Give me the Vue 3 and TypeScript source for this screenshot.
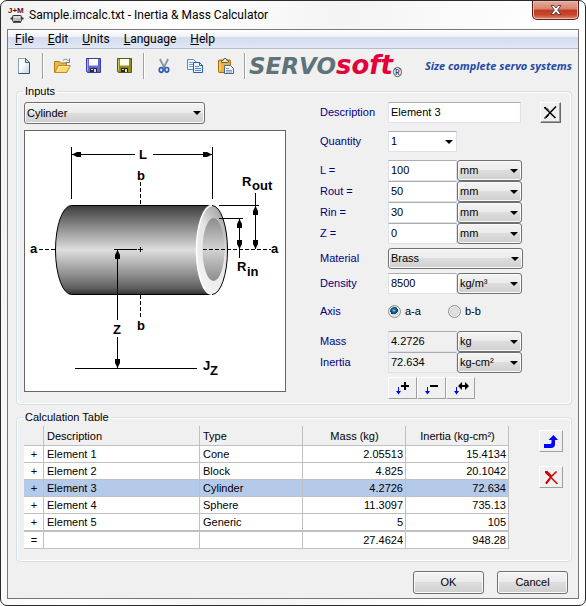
<script setup lang="ts">
import { ref } from 'vue'

interface Dimension {
  id: string
  label: string
  value: string
}

interface Row {
  name: string
  type: string
  mass: string
  inertia: string
}

const menus = ['File', 'Edit', 'Units', 'Language', 'Help']

const shape = ref('Cylinder')
const description = ref('Element 3')
const quantity = ref('1')
const material = ref('Brass')
const density = ref('8500')
const axis = ref('a-a')
const selected = ref(2)

const dimensions = ref<Dimension[]>([
  { id: 'length', label: 'L =', value: '100' },
  { id: 'rout', label: 'Rout =', value: '50' },
  { id: 'rin', label: 'Rin =', value: '30' },
  { id: 'offset', label: 'Z =', value: '0' },
])

const rows: Row[] = [
  { name: 'Element 1', type: 'Cone', mass: '2.05513', inertia: '15.4134' },
  { name: 'Element 2', type: 'Block', mass: '4.825', inertia: '20.1042' },
  { name: 'Element 3', type: 'Cylinder', mass: '4.2726', inertia: '72.634' },
  { name: 'Element 4', type: 'Sphere', mass: '11.3097', inertia: '735.13' },
  { name: 'Element 5', type: 'Generic', mass: '5', inertia: '105' },
]
</script>

<template>
  <div class="window">
    <header class="titlebar">
      <svg class="app-icon" width="17" height="16" viewBox="0 0 17 16" aria-hidden="true">
        <text x="0" y="6" class="app-icon-text">J+M</text>
        <path d="M2.5 11.500h2M13 11.500h2.500" stroke="#333" stroke-width="2" />
        <rect x="4.500" y="8.500" width="9" height="6" rx="1" fill="#bbb" stroke="#333" />
        <path d="M6 10h6" stroke="#fff" />
        <path d="M5 15.500h8" stroke="#555" />
      </svg>
      <h1 class="title">Sample.imcalc.txt - Inertia &amp; Mass Calculator</h1>
      <button class="close" type="button" aria-label="Close">
        <svg width="12" height="10" viewBox="0 0 12 10">
          <path d="M1 .5h3l2 2.500 2-2.500h3L7.700 5 11 9.500H8L6 7 4 9.500H1L4.300 5z" fill="#fff" stroke="#5a4048" stroke-width="1" />
        </svg>
      </button>
    </header>

    <main class="client">
      <nav class="menubar">
        <button v-for="m in menus" :key="m" type="button" class="menu"><u>{{ m[0] }}</u>{{ m.slice(1) }}</button>
      </nav>

      <div class="toolbar">
        <button class="tool" type="button" aria-label="New">
          <svg width="16" height="16" viewBox="0 0 16 16">
            <defs>
              <linearGradient id="page" x1="0" y1="0" x2="1" y2="1">
                <stop offset=".4" stop-color="#fff" /><stop offset="1" stop-color="#b9d0e4" />
              </linearGradient>
            </defs>
            <path d="M2.500.5h7l4 4v11h-11z" fill="url(#page)" stroke="#8ba3b8" />
            <path d="M13.500 4.500v11h-11" fill="none" stroke="#31506e" />
            <path d="M9.500.5v4h4z" fill="#d8e6f2" stroke="#43617e" />
          </svg>
        </button>
        <i class="sep"></i>
        <button class="tool" type="button" aria-label="Open">
          <svg width="17" height="16" viewBox="0 0 17 16">
            <path d="M.5 14.500v-11h5l1 1.500h6v3" fill="#e9b94c" stroke="#b07a12" />
            <path d="M.8 14.500l3.500-7h12l-3.500 7z" fill="#ffd873" stroke="#c08a1c" />
            <path d="M3.500 12.500l2-4h9" fill="none" stroke="#fff0b8" />
            <path d="M9 2.500c2-2 4-1.500 5.500.5" fill="none" stroke="#5f7f9f" />
            <path d="M15.500.5v4h-4" fill="none" stroke="#5f7f9f" />
          </svg>
        </button>
        <button class="tool" type="button" aria-label="Save">
          <svg width="15" height="15" viewBox="0 0 15 15">
            <path d="M.5.5h14v14h-13l-1-1z" fill="#6668cf" stroke="#3b3d9c" />
            <path d="M1.500 13V1.500" stroke="#a4a6f0" />
            <path d="M3 1h9v7H3z" fill="#fff" /><path d="M3 7h9v1H3z" fill="#b9bce8" />
            <path d="M4 10h7v4H4z" fill="#26273f" /><path d="M8 11h2v3H8zM5 11h2v1H5z" fill="#d8d8e8" />
          </svg>
        </button>
        <button class="tool" type="button" aria-label="Save as">
          <svg width="15" height="15" viewBox="0 0 15 15">
            <path d="M.5.5h14v14h-13l-1-1z" fill="#8f8a24" stroke="#5d5a10" />
            <path d="M1.500 13V1.500" stroke="#c9c565" />
            <path d="M3 1h9v7H3z" fill="#fffff0" /><path d="M3 7h9v1H3z" fill="#d0cd88" />
            <path d="M4 10h7v4H4z" fill="#26260c" /><path d="M8 11h2v3H8zM5 11h2v1H5z" fill="#dddcc4" />
          </svg>
        </button>
        <i class="sep"></i>
        <button class="tool" type="button" aria-label="Cut">
          <svg width="12" height="16" viewBox="0 0 12 16">
            <path d="M2 1l4.500 9M10 1L5.500 10" stroke="#7d8a99" stroke-width="1.800" />
            <path d="M2.800 1.200l3 6M9 1.500L6.500 7" stroke="#c8d2dc" stroke-width=".6" />
            <ellipse cx="3.200" cy="12" rx="1.900" ry="2.300" fill="none" stroke="#2c5cb4" stroke-width="1.700" />
            <ellipse cx="8.800" cy="11.800" rx="1.900" ry="2.300" fill="none" stroke="#2c5cb4" stroke-width="1.700" />
          </svg>
        </button>
        <button class="tool" type="button" aria-label="Copy">
          <svg width="16" height="14" viewBox="0 0 16 14">
            <path d="M.5.5h6l2.500 2.500v7.500H.5z" fill="#edf4fd" stroke="#5b8bc6" />
            <path d="M2 3.500h4M2 5.500h5M2 7.500h5" stroke="#7ba3d4" />
            <path d="M6.500 3.500h6l3 3v7h-9z" fill="#edf4fd" stroke="#2b5ca6" />
            <path d="M12.500 3.500v3h3z" fill="#fff" stroke="#2b5ca6" />
            <path d="M8 7.500h4M8 9.500h6M8 11.500h6" stroke="#5585c8" />
          </svg>
        </button>
        <button class="tool" type="button" aria-label="Paste">
          <svg width="16" height="16" viewBox="0 0 16 16">
            <rect x=".5" y="2" width="12" height="12.500" rx="1" fill="#eab13c" stroke="#a66d0b" />
            <path d="M2 4v9" stroke="#ffdf8e" />
            <path d="M3.500 4.500v-2h1.500l1-2h2l1 2h1.500v2z" fill="#e6e6d8" stroke="#6d6242" />
            <path d="M6.500 7.500h6l3 3v5h-9z" fill="#edf3fa" stroke="#50688a" />
            <path d="M8 10.500h3M8 12.500h6M8 14h6" stroke="#7b95b8" />
          </svg>
        </button>
        <i class="sep"></i>
        <div class="brand">
          <span class="brand-servo">SERVO</span><span class="brand-soft">soft</span><span class="brand-mark">®</span>
        </div>
        <p class="tagline">Size complete servo systems</p>
      </div>

      <fieldset class="group">
        <legend>Inputs</legend>
        <div class="inputs">
          <div class="shape">
            <span class="pick shape-pick">
              <select v-model="shape" aria-label="Shape">
                <option>Cylinder</option><option>Cone</option><option>Block</option><option>Sphere</option><option>Generic</option>
              </select>
            </span>
            <svg class="diagram" viewBox="0 0 260 260" role="img" aria-label="Cylinder dimensions">
              <defs>
                <linearGradient id="body" x1="0" y1="0" x2="0" y2="1">
                  <stop offset="0" stop-color="#3c3c3c" /><stop offset=".25" stop-color="#8e8e8e" />
                  <stop offset=".5" stop-color="#dedede" /><stop offset=".78" stop-color="#8e8e8e" />
                  <stop offset=".93" stop-color="#5e5e5e" /><stop offset="1" stop-color="#303030" />
                </linearGradient>
                <linearGradient id="face" x1=".8" y1="0" x2=".3" y2="1">
                  <stop offset="0" stop-color="#999" /><stop offset=".4" stop-color="#e4e4e4" /><stop offset="1" stop-color="#f4f4f4" />
                </linearGradient>
                <linearGradient id="bore" x1="0" y1="0" x2="0" y2="1">
                  <stop offset="0" stop-color="#8c8c8c" /><stop offset=".5" stop-color="#d2d2d2" /><stop offset="1" stop-color="#8c8c8c" />
                </linearGradient>
                <marker id="tip" viewBox="0 0 9 5" refX="9" refY="2.500" markerWidth="9" markerHeight="5" orient="auto-start-reverse" markerUnits="userSpaceOnUse">
                  <path d="M0 0h4l5 2.500L4 5H0z" fill="#000" stroke="none" />
                </marker>
              </defs>
              <path d="M46.500 74.500H187.500V163.500H46.500A16 44.500 0 0 1 46.500 74.500Z" fill="url(#body)" stroke="#000" />
              <ellipse cx="187" cy="119" rx="15.500" ry="44.500" fill="url(#face)" />
              <path d="M187 163.500A15.500 44.500 0 0 1 187 74.500" fill="none" stroke="#fff" stroke-width="1.500" />
              <path d="M187 74.500A15.500 44.500 0 0 1 187 163.500" fill="none" stroke="#000" />
              <ellipse cx="188.500" cy="118.500" rx="11" ry="31.500" fill="url(#bore)" />
              <g stroke="#000" fill="none">
                <path d="M46.500 16V68M187.500 16V68M194 74.500H234M194 87.500H218M50 237.500H172M89 118.500H112M113 118.500H118M115.500 116V121" />
                <path d="M230.500 62V74M214.500 118V127" />
                <path d="M115.500 51V74M115.500 164V188M14 118.500H31M178 118.500H246" stroke-dasharray="4 2" />
                <path d="M110 23.500H47" marker-end="url(#tip)" />
                <path d="M128 23.500H187" marker-end="url(#tip)" />
                <path d="M92.500 189V119" marker-end="url(#tip)" />
                <path d="M92.500 206V237" marker-end="url(#tip)" />
                <path d="M230.500 75V118" marker-start="url(#tip)" marker-end="url(#tip)" />
                <path d="M214.500 88V118" marker-start="url(#tip)" marker-end="url(#tip)" />
              </g>
              <g class="dims">
                <text x="114" y="28">L</text>
                <text x="112" y="49">b</text>
                <text x="112" y="199">b</text>
                <text x="5" y="122">a</text>
                <text x="246" y="122">a</text>
                <text x="88" y="203">Z</text>
                <text x="217" y="55">R<tspan x="227" y="59">out</tspan></text>
                <text x="212" y="140">R<tspan x="222" y="145">in</tspan></text>
                <text x="178" y="239">J<tspan x="185" y="244">Z</tspan></text>
              </g>
            </svg>
          </div>

          <div class="form">
            <div class="row">
              <label for="description">Description</label>
              <input id="description" v-model="description" class="wide" type="text" />
              <button class="raised" type="button" aria-label="Clear description">
                <svg width="13" height="13" viewBox="0 0 13 13">
                  <path d="M.5 1.500L11.500 12M12 .5L1.500 11.500" stroke="#000" stroke-width="1.500" fill="none" />
                  <path d="M0 1.500h2l3 3M0 12h2l3-3" stroke="#000" fill="none" />
                </svg>
              </button>
            </div>
            <div class="row spaced">
              <label for="quantity">Quantity</label>
              <span class="pick combo"><select id="quantity" v-model="quantity"><option>1</option><option>2</option></select></span>
            </div>
            <div class="spaced">
              <div v-for="d in dimensions" :key="d.id" class="row">
                <label :for="d.id">{{ d.label }}</label>
                <input :id="d.id" v-model="d.value" type="text" />
                <span class="pick unit"><select :aria-label="d.label + ' unit'"><option>mm</option><option>in</option></select></span>
              </div>
            </div>
            <div class="row close-row">
              <label for="material">Material</label>
              <span class="pick material"><select id="material" v-model="material"><option>Brass</option><option>Steel</option></select></span>
            </div>
            <div class="row close-row">
              <label for="density">Density</label>
              <input id="density" v-model="density" type="text" />
              <span class="pick unit"><select aria-label="Density unit"><option>kg/m³</option></select></span>
            </div>
            <div class="row axis" role="radiogroup" aria-label="Axis">
              <span class="caption">Axis</span>
              <label class="choice"><input v-model="axis" type="radio" name="axis" value="a-a" />a-a</label>
              <label class="choice"><input v-model="axis" type="radio" name="axis" value="b-b" />b-b</label>
            </div>
            <div>
              <div class="row">
                <label for="mass">Mass</label>
                <input id="mass" type="text" value="4.2726" readonly />
                <span class="pick unit"><select aria-label="Mass unit"><option>kg</option></select></span>
              </div>
              <div class="row">
                <label for="inertia">Inertia</label>
                <input id="inertia" type="text" value="72.634" readonly />
                <span class="pick unit"><select aria-label="Inertia unit"><option>kg-cm²</option></select></span>
              </div>
            </div>
            <div class="row actions">
              <button class="flat" type="button" aria-label="Add to table">
                <svg width="16" height="14" viewBox="0 0 16 14">
                  <path d="M3.500 6v5" stroke="#00f" fill="none" />
                  <path d="M1 10h5L3.500 13.500z" fill="#00f" />
                  <path d="M10 1v8M6 5h8" stroke="#000" stroke-width="2" />
                </svg>
              </button>
              <button class="flat" type="button" aria-label="Subtract from table">
                <svg width="16" height="14" viewBox="0 0 16 14">
                  <path d="M3.500 6v5" stroke="#00f" fill="none" />
                  <path d="M1 10h5L3.500 13.500z" fill="#00f" />
                  <path d="M6 5h8" stroke="#000" stroke-width="2" />
                </svg>
              </button>
              <button class="flat" type="button" aria-label="Replace in table">
                <svg width="16" height="14" viewBox="0 0 16 14">
                  <path d="M3.500 6v5" stroke="#00f" fill="none" />
                  <path d="M1 10h5L3.500 13.500z" fill="#00f" />
                  <path d="M7 5h7" stroke="#000" stroke-width="2" />
                  <path d="M5 5l4-4v8zM16 5l-4-4v8z" />
                </svg>
              </button>
            </div>
          </div>
        </div>
      </fieldset>

      <fieldset class="group results">
        <legend>Calculation Table</legend>
        <div class="calc">
          <table>
            <colgroup><col class="c-sign" /><col /><col class="c-num" /><col class="c-num" /><col class="c-num" /></colgroup>
            <thead>
              <tr>
                <th></th>
                <th class="left">Description</th>
                <th class="left">Type</th>
                <th>Mass (kg)</th>
                <th>Inertia (kg-cm²)</th>
              </tr>
            </thead>
            <tbody>
              <tr v-for="(r, i) in rows" :key="r.name" :class="{ selected: i === selected }" @click="selected = i">
                <td class="sign">+</td>
                <td>{{ r.name }}</td>
                <td>{{ r.type }}</td>
                <td class="num">{{ r.mass }}</td>
                <td class="num">{{ r.inertia }}</td>
              </tr>
            </tbody>
            <tfoot>
              <tr>
                <td class="sign">=</td>
                <td></td>
                <td></td>
                <td class="num">27.4624</td>
                <td class="num">948.28</td>
              </tr>
            </tfoot>
          </table>
          <div class="side">
            <button class="flat side-button" type="button" aria-label="Load into inputs">
              <svg width="14" height="13" viewBox="0 0 14 13">
                <path d="M0 9h6q1.500 0 1.500-1.500V5H4.500L9.500 0l4.500 5h-3v4q0 4-4 4H0z" fill="#00f" />
              </svg>
            </button>
            <button class="flat side-button" type="button" aria-label="Delete row">
              <svg width="13" height="13" viewBox="0 0 13 13">
                <path d="M0 1l5 4.500L12.500 13M11.500.5L5 7l-4 5.500" stroke="#d40000" stroke-width="1.500" fill="none" />
                <path d="M0 1h2l4 4M1 12.500l4-5" stroke="#d40000" stroke-width="2" fill="none" />
              </svg>
            </button>
          </div>
        </div>
      </fieldset>

      <footer class="footer">
        <button class="push" type="button">OK</button>
        <button class="push" type="button">Cancel</button>
      </footer>
    </main>
  </div>
</template>

<style>
body {
  margin: 0;
  background: #fff;
}
</style>

<style scoped>
.window {
  box-sizing: border-box;
  min-height: 100vh;
  display: flex;
  flex-direction: column;
  padding: 0 6px 6px;
  border: 1px solid #2b2b2b;
  border-radius: 7px;
  background: linear-gradient(100deg, #f1f1f1, #fff 25%, #f4f4f4 50%, #fff 80%);
  color: #000;
  font: 11px/13px "Liberation Sans", Arial, sans-serif;
}
button,
input,
select {
  box-sizing: border-box;
  margin: 0;
  font: inherit;
  color: inherit;
}
button {
  display: flex;
  align-items: center;
  justify-content: center;
  padding: 0;
  border: 0;
  background: none;
}

/* Title bar */
.titlebar {
  display: flex;
  align-items: flex-start;
  height: 28px;
}
.app-icon {
  margin: 6px 4px 0 1px;
}
.app-icon-text {
  font: bold 8px "Liberation Sans", Arial, sans-serif;
  fill: #6b0a1c;
}
.title {
  flex: 1;
  margin: 0;
  font: 12px/28px Roboto, "Segoe UI", sans-serif;
}
.close {
  width: 47px;
  height: 19px;
  border: 1px solid #5b1f1c;
  border-top: 0;
  border-radius: 0 0 5px 5px;
  background: linear-gradient(#e9a99a, #d9836f 45%, #bf3a22 50%, #c8442c 75%, #e08a68);
  box-shadow: inset 0 0 0 1px #eeb8aa;
}

/* Client area */
.client {
  flex: 1;
  display: flex;
  flex-direction: column;
  border: 1px solid #777;
  background: #f0f0f0;
}
.menubar {
  box-sizing: border-box;
  display: flex;
  height: 19px;
  border-bottom: 1px solid #b6bccc;
  background: linear-gradient(#fff, #eef1f9 38%, #d4dbed 42%, #e1e7f5);
}
.menu {
  padding: 0 7px;
  font: 12px/18px Roboto, "Segoe UI", sans-serif;
}
.toolbar {
  display: flex;
  align-items: center;
  height: 33px;
}
.tool {
  width: 31px;
  height: 26px;
}
.sep {
  width: 1px;
  height: 26px;
  margin: 0 3px;
  border-right: 1px solid #fff;
  background: #a0a0a0;
}
.brand {
  display: flex;
  align-items: baseline;
  line-height: 26px;
  font-family: "DejaVu Sans", Verdana, sans-serif;
  font-weight: bold;
  font-style: italic;
}
.brand-servo {
  font-size: 23px;
  color: #5f7378;
}
.brand-soft {
  font-size: 26px;
  color: #e4003a;
}
.brand-mark {
  align-self: flex-end;
  font: 12px/12px "Liberation Sans", Arial, sans-serif;
}
.tagline {
  flex: 1;
  margin: 0 6px 0 0;
  text-align: right;
  white-space: nowrap;
  color: #1f4aa5;
  font: italic bold 11px/16px "Open Sans", Verdana, sans-serif;
}

/* Group boxes */
.group {
  margin: 3px 6px 0 8px;
  padding: 5px 8px 5px 7px;
  min-width: 0;
  border: 1px solid #d5dfe5;
  border-radius: 4px;
  box-shadow: inset 0 0 0 1px #fff;
}
.results {
  margin-top: 6px;
  padding-top: 3px;
  padding-bottom: 12px;
}
legend {
  margin-left: -1px;
  padding: 0 2px;
  line-height: 12px;
}

.inputs {
  display: grid;
  grid-template-columns: 262px 1fr;
  column-gap: 34px;
}
.shape {
  display: flex;
  flex-direction: column;
  gap: 6px;
}
.diagram {
  display: block;
  border: 1px solid #666;
  background: #fff;
}
.dims {
  font: bold 13px "Liberation Sans", Arial, sans-serif;
}

/* Fields */
.form {
  display: flex;
  flex-direction: column;
}
.row {
  display: flex;
  align-items: center;
}
.spaced {
  margin-top: 8px;
}
.close-row {
  margin-top: 4px;
}
.axis {
  margin: 7px 0 9px;
}
.row > label:first-child,
.caption {
  flex: none;
  width: 68px;
  color: #00007f;
}
input[type='text'] {
  width: 69px;
  height: 21px;
  padding: 0 2px 2px;
  border: 1px solid #dde2ea;
  border-top-color: #abadb3;
  background: #fff;
}
input[type='text']:read-only {
  background: #f0f0f0;
}
input[type='text'].wide {
  width: 133px;
}
.pick {
  position: relative;
  display: block;
}
.pick select {
  display: block;
  width: 100%;
  height: 21px;
  padding: 0 18px 0 2px;
  appearance: none;
  border: 1px solid #707070;
  border-radius: 3px;
  background: linear-gradient(#f3f3f3, #ebebeb 49%, #dddddd 50%, #cfcfcf);
  box-shadow: inset 0 0 0 1px #fafafa;
}
.pick::after {
  content: '';
  position: absolute;
  right: 4px;
  top: 9px;
  border: 4px solid transparent;
  border-top-color: #000;
  border-bottom: 0;
  pointer-events: none;
}
.shape-pick {
  width: 181px;
}
.shape-pick select {
  height: 22px;
}
.unit {
  width: 65px;
}
.material {
  width: 135px;
}
.combo {
  width: 69px;
}
.combo select {
  border: 1px solid #dde2ea;
  border-top-color: #abadb3;
  border-radius: 0;
  background: #fff;
  box-shadow: none;
}
.raised {
  width: 21px;
  height: 21px;
  margin: 0 2px 0 auto;
  border: 1px solid #fff;
  border-right-color: #696969;
  border-bottom-color: #696969;
  box-shadow: inset -1px -1px #a0a0a0;
}
.choice {
  display: flex;
  align-items: center;
  gap: 4px;
  width: 60px;
  height: 21px;
}
.choice input {
  width: 13px;
  height: 13px;
  appearance: none;
  border: 1px solid #8e8f8f;
  border-radius: 50%;
  background: radial-gradient(circle, #e4e4e4, #cfcfcf);
  box-shadow: inset 0 0 0 1px #f4f4f4;
}
.choice input:checked {
  background: radial-gradient(circle at 45% 40%, #7fd0f0 0, #14639a 2px, #0b3558 4px, #d8d8d8 4px);
}
.actions {
  margin: 4px 0 0 68px;
}
.flat {
  width: 28px;
  height: 22px;
  border: 1px solid #fff;
  border-right-color: #a0a0a0;
  border-bottom-color: #a0a0a0;
}
.actions .flat {
  width: 29px;
}

/* Results */
.calc {
  display: flex;
  gap: 30px;
}
table {
  flex: 1;
  width: 100%;
  table-layout: fixed;
  border-collapse: separate;
  border-spacing: 0;
}
.c-sign {
  width: 20px;
}
.c-num {
  width: 103px;
}
th,
td {
  box-sizing: border-box;
  height: 17px;
  padding: 0 2px 0 3px;
  border-right: 1px solid #c0c0c0;
  border-bottom: 1px solid #c0c0c0;
  line-height: 16px;
  white-space: nowrap;
}
th {
  height: 20px;
  font-weight: normal;
  text-align: center;
}
th.left {
  text-align: left;
}
td {
  background: #fff;
}
.sign {
  text-align: center;
}
.num {
  text-align: right;
}
tbody tr:last-child td {
  height: 18px;
  border-bottom-width: 2px;
}
.selected td {
  background: #b5cae8;
}
.side {
  display: flex;
  flex-direction: column;
  gap: 14px;
  padding-top: 4px;
}
.side-button {
  width: 24px;
}

.footer {
  display: flex;
  justify-content: flex-end;
  gap: 13px;
  margin-top: auto;
  padding: 8px 10px 4px;
}
.push {
  width: 71px;
  height: 23px;
  border: 1px solid #707070;
  border-radius: 3px;
  background: linear-gradient(#f3f3f3, #ebebeb 49%, #dddddd 50%, #cfcfcf);
  box-shadow: inset 0 0 0 1px #fafafa;
}
</style>
